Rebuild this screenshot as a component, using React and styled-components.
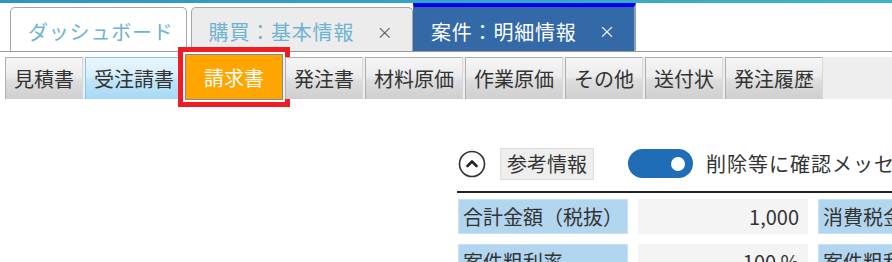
import React from "react";
import styled, { createGlobalStyle } from "styled-components";

const GlobalStyle = createGlobalStyle`
  html, body {
    margin: 0;
    padding: 0;
    background: #fff;
    overflow: hidden;
  }
  body {
    font-family: "Noto Sans CJK JP", "Noto Sans", sans-serif;
    color: #333;
  }
`;

const subTabs = [
  { label: "見積書" },
  { label: "受注請書", kind: "blue" },
  { label: "請求書", kind: "current" },
  { label: "発注書" },
  { label: "材料原価" },
  { label: "作業原価" },
  { label: "その他" },
  { label: "送付状" },
  { label: "発注履歴" },
];

const App = () => {
  return (
    <>
      <GlobalStyle />
      <Page>
        <TopStrip />
        <TabBar>
          <Tab>ダッシュボード</Tab>
          <Tab closable>
            購買：基本情報
            <Close>×</Close>
          </Tab>
          <Tab active closable>
            案件：明細情報
            <Close active>×</Close>
          </Tab>
        </TabBar>

        <SubTabRow>
          {subTabs.map((t) => (
            <SubTab key={t.label} kind={t.kind}>
              {t.label}
            </SubTab>
          ))}
        </SubTabRow>

        <Body>
          <div />
          <Panel>
            <PanelHead>
              <CircleIcon viewBox="0 0 28 28">
                <circle cx="14" cy="14" r="12.5" fill="none" stroke="#333" strokeWidth="1.6" />
                <path d="M9.5 16 L14 11.5 L18.5 16" fill="none" stroke="#222" strokeWidth="2.6" strokeLinecap="round" strokeLinejoin="round" />
              </CircleIcon>
              <HeadLabel>参考情報</HeadLabel>
              <Switch>
                <Knob />
              </Switch>
              <SwitchText>削除等に確認メッセージを表示する</SwitchText>
            </PanelHead>
            <Grid>
              <Label>合計金額（税抜）</Label>
              <Value>1,000</Value>
              <Label>消費税金額</Label>
              <Label>案件粗利率</Label>
              <Value>100 %</Value>
              <Label>案件粗利額</Label>
            </Grid>
          </Panel>
        </Body>
      </Page>
    </>
  );
};

const Page = styled.div`
  width: 892px;
  height: 262px;
  overflow: hidden;
`;

const TopStrip = styled.div`
  height: 3px;
  background: linear-gradient(90deg, #2e94c6, #3bb5c6);
`;

const TabBar = styled.div`
  display: flex;
  align-items: flex-end;
  height: 48px;
  padding-left: 10px;
  border-bottom: 1px solid #9a9a9a;
`;

const Tab = styled.div`
  display: flex;
  align-items: center;
  box-sizing: border-box;
  height: ${(p) => (p.active ? "48px" : "44px")};
  margin-right: ${(p) => (p.active ? "0" : "4px")};
  padding: ${(p) => (p.closable ? "4px 19px 0 17px" : "4px 12px 0 17px")};
  font-size: 20px;
  letter-spacing: 0.8px;
  white-space: nowrap;
  color: ${(p) => (p.active ? "#fff" : "#6db3d3")};
  background: ${(p) => (p.active ? "#3469a7" : p.closable ? "#ececec" : "#fff")};
  border: 1px solid ${(p) => (p.active ? "#3469a7" : "#a6a6a6")};
  border-top: ${(p) => (p.active ? "4px solid #0000f0" : "1px solid #a6a6a6")};
  border-bottom: none;
  border-radius: ${(p) => (p.active ? "0" : "5px 5px 0 0")};
  ${(p) => p.active && "margin-left: -4px; border-right: 2px solid #8da3bd;"}
`;

const Close = styled.span`
  margin-left: 22px;
  font-size: 20px;
  letter-spacing: 0;
  color: ${(p) => (p.active ? "#fff" : "#555")};
  font-family: "DejaVu Sans", sans-serif;
  font-weight: 300;
`;

const SubTabRow = styled.div`
  display: flex;
  gap: 2px;
  height: 42px;
  margin: 5px 0 0 5px;
  background: #eeeeee;
`;

const SubTab = styled.div`
  display: flex;
  align-items: center;
  box-sizing: border-box;
  padding: ${(p) => (p.kind === "current" ? "0 18px" : "0 8px")};
  font-size: 20px;
  white-space: nowrap;
  color: ${(p) => (p.kind === "current" ? "#fff" : "#333")};
  background: ${(p) =>
    p.kind === "current"
      ? "#ffa500"
      : p.kind === "blue"
      ? "linear-gradient(#eaf6fd, #d4eefb 45%, #bfe4f8 55%, #a7d9f5)"
      : "linear-gradient(#f6f6f6, #ebebeb 45%, #dddddd 55%, #cfcfcf)"};
  border: 1px solid ${(p) => (p.kind === "blue" ? "#8cc5e6" : "#b0b0b0")};
  border-bottom: none;
  border-right-color: ${(p) => (p.kind === "blue" ? "#8cc5e6" : "#d8d8d8")};
  ${(p) =>
    p.kind === "current" &&
    `
    border: 1px solid #8a8a8a;
    margin-top: -3px;
    height: 46px;
    outline: 5px solid #ee1c25;
    outline-offset: 2px;
  `}
`;

const Body = styled.div`
  display: grid;
  grid-template-columns: 457px 1fr;
  margin-top: 48px;
`;

const Panel = styled.div`
  min-width: 0;
`;

const PanelHead = styled.div`
  display: flex;
  align-items: center;
  height: 33px;
  padding-left: 1px;
  padding-bottom: 11px;
  border-bottom: 2px solid #222;
  white-space: nowrap;
`;

const CircleIcon = styled.svg`
  width: 28px;
  height: 28px;
  flex: none;
`;

const HeadLabel = styled.div`
  margin-left: 14px;
  padding: 0 6px;
  height: 30px;
  line-height: 30px;
  font-size: 20px;
  background: #eeeeee;
  border: 1px solid #dcdcdc;
`;

const Switch = styled.div`
  display: flex;
  align-items: center;
  justify-content: flex-end;
  box-sizing: border-box;
  flex: none;
  width: 65px;
  height: 29px;
  margin-left: 34px;
  padding-right: 8px;
  border-radius: 15px;
  background: #1f6db7;
`;

const Knob = styled.div`
  width: 14px;
  height: 14px;
  border-radius: 50%;
  background: #fff;
`;

const SwitchText = styled.div`
  margin-left: 13px;
  font-size: 20px;
  letter-spacing: 1px;
  color: #333;
`;

const Grid = styled.div`
  display: grid;
  grid-template-columns: 170px 170px 170px;
  grid-auto-rows: 35px;
  column-gap: 10px;
  row-gap: 10px;
  margin-top: 6px;
  padding-left: 1px;
`;

const Label = styled.div`
  display: flex;
  align-items: center;
  padding-left: 4px;
  font-size: 20px;
  white-space: nowrap;
  overflow: hidden;
  background: #b3d6f0;
  border: 1px solid #c8e2f4;
`;

const Value = styled.div`
  display: flex;
  align-items: center;
  justify-content: flex-end;
  padding-right: 9px;
  font-size: 20px;
  background: #f4f4f4;
`;

export default App;
